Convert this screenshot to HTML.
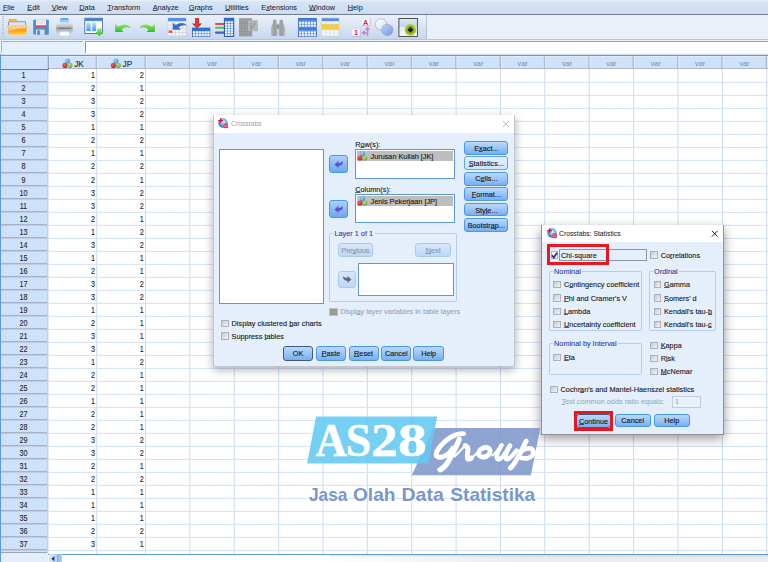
<!DOCTYPE html>
<html><head><meta charset="utf-8"><title>SPSS Crosstabs</title>
<style>
html,body{margin:0;padding:0;}
body{width:768px;height:562px;overflow:hidden;background:#fff;font-family:"Liberation Sans",sans-serif;font-size:7.3px;color:#1a1a1a;position:relative;-webkit-text-stroke:0.12px;}
.a{position:absolute;white-space:nowrap;line-height:1;}
.n{font-size:8.3px;color:#26262c;transform:scaleX(0.87);}
.n.r{text-align:right;transform-origin:100% 50%;}
u{text-decoration:underline;text-underline-offset:0.3px;text-decoration-thickness:0.55px;text-decoration-color:rgba(30,30,40,0.7);}
.btn{position:absolute;box-sizing:border-box;border:1.1px solid #4a98ea;border-radius:3px;background:linear-gradient(#b9d8fb,#9cc7f7 45%,#78aff0);text-align:center;white-space:nowrap;color:#15151c;}
.btn.def{border-color:#40597c;}
.btn.prs{background:linear-gradient(#e3effd,#cfe3fb);border-color:#5aa5ee;}
.btn.arw{background:linear-gradient(#aed0fa,#8dbdf5 45%,#6ea7ee);}
.btn.dis u{text-decoration-color:#8b97a8;}
.btn.dis{border-color:#a9cbf0;background:linear-gradient(#d6e7fb,#bdd7f6);color:#8b97a8;}
.lb{position:absolute;box-sizing:border-box;border:1px solid #5b97d9;background:#fff;}
.cb{position:absolute;box-sizing:border-box;width:7.4px;height:7.4px;border:0.9px solid #adb2ba;background:linear-gradient(135deg,#c6cacf,#eceef0 85%);}
.grp{position:absolute;box-sizing:border-box;border:0.9px solid #b4cdee;border-radius:1.5px;}
.gl{position:absolute;background:#e4effb;color:#3a3fa3;padding:0 1.5px;line-height:1;}
.dlg{position:absolute;box-sizing:border-box;background:#e4effb;border:1px solid #c3c7cd;box-shadow:0 2.5px 9px rgba(0,0,0,0.33);}
.ttl{position:absolute;left:0;top:0;right:0;background:#fff;}
</style></head><body>

<div class="a" style="left:0;top:0;width:768px;height:14px;background:linear-gradient(#e8eff9 0,#d6e3f4 2.5px,#cbdcf1 100%);"></div>
<div class="a" style="left:0;top:13.6px;width:768px;height:1.1px;background:#717d8d;"></div>
<div class="a" style="left:2.9px;top:3.9px;font-size:7.3px;-webkit-text-stroke:0.04px;color:#20222a;"><u>F</u>ile</div>
<div class="a" style="left:27.3px;top:3.9px;font-size:7.3px;-webkit-text-stroke:0.04px;color:#20222a;"><u>E</u>dit</div>
<div class="a" style="left:51.7px;top:3.9px;font-size:7.3px;-webkit-text-stroke:0.04px;color:#20222a;"><u>V</u>iew</div>
<div class="a" style="left:79.3px;top:3.9px;font-size:7.3px;-webkit-text-stroke:0.04px;color:#20222a;"><u>D</u>ata</div>
<div class="a" style="left:107.3px;top:3.9px;font-size:7.3px;-webkit-text-stroke:0.04px;color:#20222a;"><u>T</u>ransform</div>
<div class="a" style="left:152.7px;top:3.9px;font-size:7.3px;-webkit-text-stroke:0.04px;color:#20222a;"><u>A</u>nalyze</div>
<div class="a" style="left:188.7px;top:3.9px;font-size:7.3px;-webkit-text-stroke:0.04px;color:#20222a;"><u>G</u>raphs</div>
<div class="a" style="left:225px;top:3.9px;font-size:7.3px;-webkit-text-stroke:0.04px;color:#20222a;"><u>U</u>tilities</div>
<div class="a" style="left:261.3px;top:3.9px;font-size:7.3px;-webkit-text-stroke:0.04px;color:#20222a;">E<u>x</u>tensions</div>
<div class="a" style="left:309px;top:3.9px;font-size:7.3px;-webkit-text-stroke:0.04px;color:#20222a;"><u>W</u>indow</div>
<div class="a" style="left:347.7px;top:3.9px;font-size:7.3px;-webkit-text-stroke:0.04px;color:#20222a;"><u>H</u>elp</div>
<div class="a" style="left:0;top:14.7px;width:768px;height:26px;background:#e9f0fa;"></div>
<div class="a" style="left:0;top:14.7px;width:426px;height:24.6px;background:linear-gradient(#e9f0fa,#dbe6f6 45%,#c4d6ee);border-right:1px solid #b8c4d4;border-bottom:1px solid #b3bfce;"></div>
<div class="a" style="left:2px;top:16px;width:1.5px;height:22px;background:repeating-linear-gradient(#b9c6d8 0,#b9c6d8 1px,transparent 1px,transparent 2px);"></div>
<svg class="a" style="left:0;top:0;" width="768" height="56" viewBox="0 0 768 56">
<defs>
<linearGradient id="gFold" x1="0" y1="0" x2="0" y2="1"><stop offset="0" stop-color="#ffc562"/><stop offset="0.55" stop-color="#f89d1c"/><stop offset="1" stop-color="#ffd95e"/></linearGradient>
<linearGradient id="gBlue" x1="0" y1="0" x2="0" y2="1"><stop offset="0" stop-color="#bfe0fa"/><stop offset="1" stop-color="#4a96e4"/></linearGradient>
<linearGradient id="gGrn" x1="0" y1="0" x2="0" y2="1"><stop offset="0" stop-color="#8fea6a"/><stop offset="1" stop-color="#38b82e"/></linearGradient>
<linearGradient id="gGry" x1="0" y1="0" x2="0" y2="1"><stop offset="0" stop-color="#e2e4e6"/><stop offset="0.5" stop-color="#a9adb0"/><stop offset="1" stop-color="#cfd2d5"/></linearGradient>
<linearGradient id="gTab" x1="0" y1="0" x2="0" y2="1"><stop offset="0" stop-color="#2f6fd0"/><stop offset="1" stop-color="#5b9be8"/></linearGradient>
<radialGradient id="gBallB" cx="0.4" cy="0.35" r="0.7"><stop offset="0" stop-color="#a9d2f6"/><stop offset="1" stop-color="#3d86d6"/></radialGradient>
<radialGradient id="gBallR" cx="0.4" cy="0.35" r="0.7"><stop offset="0" stop-color="#f46a6a"/><stop offset="1" stop-color="#c9101c"/></radialGradient>
<radialGradient id="gBallG" cx="0.4" cy="0.35" r="0.7"><stop offset="0" stop-color="#b5e08a"/><stop offset="1" stop-color="#5fa93a"/></radialGradient>
<g id="balls"><circle cx="2.6" cy="-4.3" r="2.5" fill="url(#gBallB)"/><circle cx="0" cy="0" r="2.55" fill="url(#gBallR)"/><circle cx="4.9" cy="0" r="2.55" fill="url(#gBallG)"/></g>
</defs>
<linearGradient id="gTabF" x1="0" y1="0" x2="0" y2="1"><stop offset="0" stop-color="#ffe07a"/><stop offset="1" stop-color="#f0a22c"/></linearGradient>
<path d="M8.6 34 L8.6 20.2 Q8.6 19.1 9.7 19.1 L15.4 19.1 Q16.4 19.1 16.7 20.1 L17 21 L24.6 21 Q25.6 21 25.6 22 L25.6 34 Z" fill="#e99b2d"/>
<path d="M9.2 21 L9.2 20.4 Q9.2 19.7 9.9 19.7 L15.2 19.7 Q15.9 19.7 16.1 20.4 L16.3 21 Z" fill="url(#gTabF)"/>
<rect x="8.3" y="22.3" width="17.5" height="3.2" fill="#3f6fcf"/>
<rect x="9" y="22.3" width="16.2" height="3.2" fill="#f6f9ff"/>
<rect x="9" y="23.5" width="16.2" height="0.9" fill="#b7d0f2"/>
<path d="M7.4 25.9 Q7.3 25 8.2 25 L26.6 25 Q27.5 25 27.4 25.9 L25.9 34.2 Q25.8 35.1 24.9 35.1 L10 35.1 Q9.1 35.1 9 34.2 Z" fill="url(#gFold)"/>
<path d="M8.1 25.6 L26.7 25.6 L26.4 27.4 Q17 27.8 8.8 31.2 Z" fill="#fff" fill-opacity="0.36"/>
<path d="M33.2 20.6 Q33.2 19.8 34 19.8 L48 19.8 Q48.8 19.8 48.8 20.6 L48.8 34 Q48.8 34.8 48 34.8 L34.8 34.8 L33.2 33.4 Z" fill="#4f8fcb"/>
<rect x="36.0" y="19.8" width="10.1" height="5.7" fill="#eef2f7"/>
<rect x="37.2" y="21.4" width="7.8" height="0.6" fill="#c9d0da"/><rect x="37.2" y="22.8" width="7.8" height="0.6" fill="#c9d0da"/>
<rect x="36.0" y="25.4" width="10.1" height="2.0" fill="#e34b72"/>
<rect x="36" y="29.6" width="8.6" height="5.2" fill="#d9e0e8"/><rect x="37.4" y="30.4" width="2.3" height="4.4" fill="#3f7fc0"/>
<linearGradient id="gPap" x1="0" y1="0" x2="0" y2="1"><stop offset="0" stop-color="#4f9fe8"/><stop offset="0.35" stop-color="#8cc3f3"/><stop offset="1" stop-color="#e4f1fc"/></linearGradient>
<path d="M59.4 24.6 L60.2 18.9 Q60.4 18.1 61.2 18.1 L67.6 18.1 Q68.4 18.1 68.6 18.9 L69.4 24.6 Z" fill="url(#gPap)"/>
<rect x="56" y="23.2" width="16.8" height="10.4" rx="2.8" fill="url(#gGry)"/>
<rect x="57.6" y="27.6" width="13.6" height="1.5" fill="#7d8185"/>
<rect x="70.2" y="26.4" width="1.2" height="1.2" fill="#6fdc5a"/>
<path d="M59.6 31.4 L69.2 31.4 L69.8 36 L59 36 Z" fill="#f4f8fd" stroke="#b9c1cb" stroke-width="0.4"/>
<rect x="84.8" y="18.3" width="17.6" height="15.2" fill="#fdfefe" stroke="#4b67a6" stroke-width="0.9"/>
<rect x="85.2" y="18.6" width="16.8" height="2.6" fill="url(#gTab)"/>
<rect x="86.4" y="22.5" width="4.3" height="8.6" fill="url(#gBlue)"/><rect x="92.1" y="22.5" width="4.1" height="8.6" fill="url(#gBlue)"/>
<path d="M97.3 28.4 L101.6 28.4 L101.6 32 L103.2 32 L99.4 36.2 L95.4 32 L97.3 32 Z" fill="url(#gGrn)"/>
<path id="undo" d="M115.1 23.9 L115.1 31.9 L123.5 31.9 L121.5 29.8 Q125 25.6 130.8 28.3 Q127 22 118 26.4 Z" fill="url(#gGrn)"/>
<use href="#undo" transform="translate(270,0) scale(-1,1)"/>
<rect x="168" y="18" width="18" height="18" rx="0.8" fill="#f3f4f6" stroke="#c2c6cc" stroke-width="0.5"/>
<rect x="168" y="18" width="18" height="3.3" fill="#5b8fe6"/>
<rect x="171.7" y="21.3" width="0.6" height="14.7" fill="#c9ccd2"/>
<rect x="175.29999999999998" y="21.3" width="0.6" height="14.7" fill="#c9ccd2"/>
<rect x="178.9" y="21.3" width="0.6" height="14.7" fill="#c9ccd2"/>
<rect x="182.5" y="21.3" width="0.6" height="14.7" fill="#c9ccd2"/>
<rect x="168" y="24.7" width="18" height="0.6" fill="#c9ccd2"/>
<rect x="168" y="28.400000000000002" width="18" height="0.6" fill="#c9ccd2"/>
<rect x="168" y="32.10000000000001" width="18" height="0.6" fill="#c9ccd2"/>
<rect x="168.7" y="30.3" width="3.5" height="2.6" fill="#ee4c60"/>
<path d="M172.8 22.7 L172.8 29.8 L180.8 29.8 L178.6 27.6 Q181.5 24.3 187 25.4 Q182.5 20.8 175.6 24.9 Z" fill="#2f6fd4"/>
<linearGradient id="gRed" x1="0" y1="0" x2="1" y2="0"><stop offset="0" stop-color="#b2231b"/><stop offset="0.5" stop-color="#e2402f"/><stop offset="1" stop-color="#a81c15"/></linearGradient>
<path d="M195 18 L199 18 L199 23.4 L202 23.4 L197 28.8 L192 23.4 L195 23.4 Z" fill="url(#gRed)"/>
<rect x="192.3" y="28" width="17.6" height="8.7" fill="#4c88de" stroke="#2b4f9e" stroke-width="0.6"/>
<rect x="192.3" y="28" width="17.6" height="2.8" fill="#2f6fce"/>
<rect x="192.85" y="31.2" width="2.35" height="2.3" fill="#e9f2fe"/><rect x="192.85" y="34.05" width="2.35" height="2.3" fill="#e9f2fe"/>
<rect x="195.73" y="31.2" width="2.35" height="2.3" fill="#e9f2fe"/><rect x="195.73" y="34.05" width="2.35" height="2.3" fill="#e9f2fe"/>
<rect x="198.61" y="31.2" width="2.35" height="2.3" fill="#e9f2fe"/><rect x="198.61" y="34.05" width="2.35" height="2.3" fill="#e9f2fe"/>
<rect x="201.49" y="31.2" width="2.35" height="2.3" fill="#e9f2fe"/><rect x="201.49" y="34.05" width="2.35" height="2.3" fill="#e9f2fe"/>
<rect x="204.37" y="31.2" width="2.35" height="2.3" fill="#e9f2fe"/><rect x="204.37" y="34.05" width="2.35" height="2.3" fill="#e9f2fe"/>
<rect x="207.25" y="31.2" width="2.35" height="2.3" fill="#e9f2fe"/><rect x="207.25" y="34.05" width="2.35" height="2.3" fill="#e9f2fe"/>
<rect x="215" y="22.9" width="10.6" height="2.1" rx="1" fill="#e8455f"/>
<rect x="215" y="26.7" width="10.6" height="2.1" rx="1" fill="#56c63f"/>
<rect x="215" y="31.6" width="10.6" height="2.2" rx="1" fill="#3f63d8"/>
<rect x="224.3" y="18.2" width="9.5" height="18.3" fill="#3f7bd8" stroke="#244c9c" stroke-width="0.8"/>
<rect x="224.3" y="18.2" width="9.5" height="2.6" fill="#2f6fce"/>
<rect x="225.00" y="21.30" width="2.4" height="2.0" fill="#f2f7fe"/>
<rect x="227.85" y="21.30" width="2.4" height="2.0" fill="#f2f7fe"/>
<rect x="230.70" y="21.30" width="2.4" height="2.0" fill="#f2f7fe"/>
<rect x="225.00" y="23.80" width="2.4" height="2.0" fill="#f2f7fe"/>
<rect x="227.85" y="23.80" width="2.4" height="2.0" fill="#f2f7fe"/>
<rect x="230.70" y="23.80" width="2.4" height="2.0" fill="#f2f7fe"/>
<rect x="225.00" y="26.30" width="2.4" height="2.0" fill="#f2f7fe"/>
<rect x="227.85" y="26.30" width="2.4" height="2.0" fill="#f2f7fe"/>
<rect x="230.70" y="26.30" width="2.4" height="2.0" fill="#f2f7fe"/>
<rect x="225.00" y="28.80" width="2.4" height="2.0" fill="#f2f7fe"/>
<rect x="227.85" y="28.80" width="2.4" height="2.0" fill="#f2f7fe"/>
<rect x="230.70" y="28.80" width="2.4" height="2.0" fill="#f2f7fe"/>
<rect x="225.00" y="31.30" width="2.4" height="2.0" fill="#f2f7fe"/>
<rect x="227.85" y="31.30" width="2.4" height="2.0" fill="#f2f7fe"/>
<rect x="230.70" y="31.30" width="2.4" height="2.0" fill="#f2f7fe"/>
<rect x="225.00" y="33.80" width="2.4" height="2.0" fill="#f2f7fe"/>
<rect x="227.85" y="33.80" width="2.4" height="2.0" fill="#f2f7fe"/>
<rect x="230.70" y="33.80" width="2.4" height="2.0" fill="#f2f7fe"/>
<rect x="239" y="18.2" width="13.2" height="18.2" fill="#9fa1a3"/>
<rect x="241.64" y="18.2" width="0.4" height="18.2" fill="#8a8c8e"/>
<rect x="244.28" y="18.2" width="0.4" height="18.2" fill="#8a8c8e"/>
<rect x="246.92" y="18.2" width="0.4" height="18.2" fill="#8a8c8e"/>
<rect x="249.56" y="18.2" width="0.4" height="18.2" fill="#8a8c8e"/>
<rect x="239" y="20.8" width="13.2" height="0.4" fill="#8a8c8e"/>
<rect x="239" y="23.4" width="13.2" height="0.4" fill="#8a8c8e"/>
<rect x="239" y="26.0" width="13.2" height="0.4" fill="#8a8c8e"/>
<rect x="239" y="28.6" width="13.2" height="0.4" fill="#8a8c8e"/>
<rect x="239" y="31.2" width="13.2" height="0.4" fill="#8a8c8e"/>
<rect x="239" y="33.8" width="13.2" height="0.4" fill="#8a8c8e"/>
<rect x="248" y="20.3" width="9.9" height="10.9" fill="#b5b6b8"/>
<path d="M251 23 L251 30.5 M251 27.5 Q253 28.5 254.3 25 L254.6 22.5" stroke="#7f8183" stroke-width="0.8" fill="none"/>
<linearGradient id="gBin" x1="0" y1="0" x2="1" y2="0"><stop offset="0" stop-color="#b9bbbd"/><stop offset="0.5" stop-color="#9b9d9f"/><stop offset="1" stop-color="#a9abad"/></linearGradient>
<path id="binL" d="M273.2 19.8 L276.3 19.8 L276.7 23.4 L277.3 24.4 L277.3 34.5 Q277.3 35.9 275.9 35.9 L272.4 35.9 Q271 35.9 271 34.5 L271 29 Q271 25.4 272.8 23.4 Z" fill="url(#gBin)"/>
<use href="#binL" transform="translate(556,0) scale(-1,1)"/>
<rect x="277" y="24.6" width="2" height="4.2" fill="#8f9193"/>
<rect x="298.5" y="18.4" width="17.8" height="8.7" fill="#4c88de" stroke="#2b4f9e" stroke-width="0.6"/>
<rect x="298.5" y="18.4" width="17.8" height="2.9" fill="url(#gTab)"/>
<rect x="299.05" y="21.70" width="2.35" height="2.25" fill="#e9f2fe"/><rect x="299.05" y="24.50" width="2.35" height="2.25" fill="#e9f2fe"/>
<rect x="301.95" y="21.70" width="2.35" height="2.25" fill="#e9f2fe"/><rect x="301.95" y="24.50" width="2.35" height="2.25" fill="#e9f2fe"/>
<rect x="304.85" y="21.70" width="2.35" height="2.25" fill="#e9f2fe"/><rect x="304.85" y="24.50" width="2.35" height="2.25" fill="#e9f2fe"/>
<rect x="307.75" y="21.70" width="2.35" height="2.25" fill="#e9f2fe"/><rect x="307.75" y="24.50" width="2.35" height="2.25" fill="#e9f2fe"/>
<rect x="310.65" y="21.70" width="2.35" height="2.25" fill="#e9f2fe"/><rect x="310.65" y="24.50" width="2.35" height="2.25" fill="#e9f2fe"/>
<rect x="313.55" y="21.70" width="2.35" height="2.25" fill="#e9f2fe"/><rect x="313.55" y="24.50" width="2.35" height="2.25" fill="#e9f2fe"/>
<rect x="298.5" y="28.0" width="17.8" height="8.7" fill="#4c88de" stroke="#2b4f9e" stroke-width="0.6"/>
<rect x="298.5" y="28.0" width="17.8" height="2.9" fill="url(#gTab)"/>
<rect x="299.05" y="31.30" width="2.35" height="2.25" fill="#e9f2fe"/><rect x="299.05" y="34.10" width="2.35" height="2.25" fill="#e9f2fe"/>
<rect x="301.95" y="31.30" width="2.35" height="2.25" fill="#e9f2fe"/><rect x="301.95" y="34.10" width="2.35" height="2.25" fill="#e9f2fe"/>
<rect x="304.85" y="31.30" width="2.35" height="2.25" fill="#e9f2fe"/><rect x="304.85" y="34.10" width="2.35" height="2.25" fill="#e9f2fe"/>
<rect x="307.75" y="31.30" width="2.35" height="2.25" fill="#e9f2fe"/><rect x="307.75" y="34.10" width="2.35" height="2.25" fill="#e9f2fe"/>
<rect x="310.65" y="31.30" width="2.35" height="2.25" fill="#e9f2fe"/><rect x="310.65" y="34.10" width="2.35" height="2.25" fill="#e9f2fe"/>
<rect x="313.55" y="31.30" width="2.35" height="2.25" fill="#e9f2fe"/><rect x="313.55" y="34.10" width="2.35" height="2.25" fill="#e9f2fe"/>
<rect x="321.7" y="18.2" width="17.2" height="17.9" rx="0.8" fill="#f4f5f7" stroke="#c2c6cc" stroke-width="0.5"/>
<rect x="321.7" y="18.2" width="17.2" height="3" fill="#5b8fe6"/>
<rect x="321.7" y="23.9" width="17.2" height="5.8" fill="#f7cc1c"/>
<rect x="325.7" y="21.2" width="0.6" height="14.9" fill="#d5d7db" opacity="0.8"/>
<rect x="330.0" y="21.2" width="0.6" height="14.9" fill="#d5d7db" opacity="0.8"/>
<rect x="334.29999999999995" y="21.2" width="0.6" height="14.9" fill="#d5d7db" opacity="0.8"/>
<rect x="321.7" y="23.9" width="17.2" height="0.5" fill="#d9dbde" opacity="0.8"/>
<rect x="321.7" y="26.85" width="17.2" height="0.5" fill="#d9dbde" opacity="0.8"/>
<rect x="321.7" y="29.8" width="17.2" height="0.5" fill="#d9dbde" opacity="0.8"/>
<rect x="321.7" y="32.75" width="17.2" height="0.5" fill="#d9dbde" opacity="0.8"/>
<rect x="361.6" y="18.9" width="8.8" height="6.8" fill="#9aa3b0"/><rect x="361.1" y="18.4" width="8.8" height="6.8" fill="#fbfbfd" stroke="#c8ccd3" stroke-width="0.3"/>
<text x="365.5" y="24.6" font-family="Liberation Sans" font-weight="bold" font-size="7.2" text-anchor="middle" fill="#d81b60">A</text>
<rect x="352.1" y="29.6" width="8.8" height="6.8" fill="#9aa3b0"/><rect x="351.6" y="29.1" width="8.8" height="6.8" fill="#fbfbfd" stroke="#c8ccd3" stroke-width="0.3"/>
<text x="356" y="35.4" font-family="Liberation Sans" font-weight="bold" font-size="7.4" text-anchor="middle" fill="#d81b60">1</text>
<path d="M367.5 35.9 L367.5 29 M366.2 29.4 L367.5 27.2 L368.8 29.4 Z M367.5 32.8 L364 32.8 M364.4 31.5 L362.4 32.8 L364.4 34.1 Z" stroke="#c985cf" stroke-width="1.5" fill="#c985cf" stroke-linejoin="round"/>
<linearGradient id="gC1" x1="0" y1="0" x2="1" y2="1"><stop offset="0" stop-color="#ffffff"/><stop offset="1" stop-color="#d3def4"/></linearGradient>
<linearGradient id="gC2" x1="0" y1="0" x2="1" y2="1"><stop offset="0" stop-color="#bdd1f7"/><stop offset="1" stop-color="#4f84e6"/></linearGradient>
<circle cx="381.1" cy="24.5" r="5.7" fill="url(#gC1)" stroke="#9a9ea6" stroke-width="0.6"/>
<circle cx="387.3" cy="29.9" r="5.7" fill="url(#gC2)" fill-opacity="0.78" stroke="#9a9ea6" stroke-width="0.6"/>
<linearGradient id="gPB" x1="0" y1="0" x2="0" y2="1"><stop offset="0" stop-color="#dfe8f6"/><stop offset="0.45" stop-color="#c3d6ee"/><stop offset="0.46" stop-color="#e2ebf8"/><stop offset="1" stop-color="#f7f9fd"/></linearGradient>
<rect x="398.9" y="18.5" width="18.5" height="17.9" fill="url(#gPB)" stroke="#3d3f42" stroke-width="0.9"/>
<circle cx="410.4" cy="29.8" r="5.9" fill="#b3d033"/><circle cx="410.4" cy="29.8" r="4.4" fill="#8fb01e"/>
<path d="M407.9 29.8 L412.9 29.8 M410.4 27.3 L410.4 32.3" stroke="#1a1c12" stroke-width="2.3"/>
</svg>
<div class="a" style="left:0;top:39.3px;width:768px;height:1px;background:#b9c5d5;"></div>
<div class="a" style="left:0;top:40.2px;width:768px;height:14.7px;background:#edf3fb;"></div>
<div class="a" style="left:1.2px;top:41.3px;width:81.8px;height:11.8px;background:#e6f0fc;border-top:1px solid #a9b1bc;border-left:1px solid #a9b1bc;box-sizing:border-box;"></div>
<div class="a" style="left:85.2px;top:41.3px;width:683px;height:11.8px;background:#fff;border-top:1px solid #9aa1ab;border-left:1px solid #8e959e;box-sizing:border-box;"></div>
<svg class="a" style="left:0;top:0;" width="768" height="562" viewBox="0 0 768 562">
<rect x="0" y="56.0" width="768" height="12.3" fill="#cfe2fb"/>
<rect x="0" y="56.0" width="48.2" height="13.4" fill="#cfe2fb"/>
<rect x="0" y="69" width="47.0" height="493" fill="#cfe2fb"/>
<rect x="0" y="54.8" width="768" height="1.25" fill="#5b9bd8"/>
<rect x="0" y="56.0" width="768" height="0.8" fill="#e3eefc"/>
<rect x="95.60" y="56.3" width="1.5" height="12.2" fill="#b3bcc9"/>
<rect x="97.10" y="56.6" width="0.8" height="11.6" fill="#e6f0fc"/>
<rect x="144.40" y="56.3" width="1.5" height="12.2" fill="#b3bcc9"/>
<rect x="145.90" y="56.6" width="0.8" height="11.6" fill="#e6f0fc"/>
<rect x="188.87" y="56.3" width="1.5" height="12.2" fill="#b3bcc9"/>
<rect x="190.37" y="56.6" width="0.8" height="11.6" fill="#e6f0fc"/>
<rect x="233.24" y="56.3" width="1.5" height="12.2" fill="#b3bcc9"/>
<rect x="234.74" y="56.6" width="0.8" height="11.6" fill="#e6f0fc"/>
<rect x="277.61" y="56.3" width="1.5" height="12.2" fill="#b3bcc9"/>
<rect x="279.11" y="56.6" width="0.8" height="11.6" fill="#e6f0fc"/>
<rect x="321.98" y="56.3" width="1.5" height="12.2" fill="#b3bcc9"/>
<rect x="323.48" y="56.6" width="0.8" height="11.6" fill="#e6f0fc"/>
<rect x="366.35" y="56.3" width="1.5" height="12.2" fill="#b3bcc9"/>
<rect x="367.85" y="56.6" width="0.8" height="11.6" fill="#e6f0fc"/>
<rect x="410.72" y="56.3" width="1.5" height="12.2" fill="#b3bcc9"/>
<rect x="412.22" y="56.6" width="0.8" height="11.6" fill="#e6f0fc"/>
<rect x="455.09" y="56.3" width="1.5" height="12.2" fill="#b3bcc9"/>
<rect x="456.59" y="56.6" width="0.8" height="11.6" fill="#e6f0fc"/>
<rect x="499.46" y="56.3" width="1.5" height="12.2" fill="#b3bcc9"/>
<rect x="500.96" y="56.6" width="0.8" height="11.6" fill="#e6f0fc"/>
<rect x="543.83" y="56.3" width="1.5" height="12.2" fill="#b3bcc9"/>
<rect x="545.33" y="56.6" width="0.8" height="11.6" fill="#e6f0fc"/>
<rect x="588.20" y="56.3" width="1.5" height="12.2" fill="#b3bcc9"/>
<rect x="589.70" y="56.6" width="0.8" height="11.6" fill="#e6f0fc"/>
<rect x="632.57" y="56.3" width="1.5" height="12.2" fill="#b3bcc9"/>
<rect x="634.07" y="56.6" width="0.8" height="11.6" fill="#e6f0fc"/>
<rect x="676.94" y="56.3" width="1.5" height="12.2" fill="#b3bcc9"/>
<rect x="678.44" y="56.6" width="0.8" height="11.6" fill="#e6f0fc"/>
<rect x="721.31" y="56.3" width="1.5" height="12.2" fill="#b3bcc9"/>
<rect x="722.81" y="56.6" width="0.8" height="11.6" fill="#e6f0fc"/>
<rect x="765.68" y="56.3" width="1.5" height="12.2" fill="#b3bcc9"/>
<rect x="767.18" y="56.6" width="0.8" height="11.6" fill="#e6f0fc"/>
<rect x="48" y="68.05" width="720" height="0.9" fill="#aab4c3"/>
<rect x="47.8" y="56.3" width="1.0" height="13.7" fill="#727d8c"/>
<rect x="0" y="69.0" width="48.8" height="1.05" fill="#727d8c"/>
<rect x="48.8" y="56.6" width="0.7" height="11.5" fill="#e6f0fc"/>
<rect x="0.9" y="80.95" width="46.2" height="1.0" fill="#a6b0bf"/>
<rect x="0.9" y="81.95" width="46.2" height="1.1" fill="#bfcce0"/>
<rect x="0.9" y="93.95" width="46.2" height="1.0" fill="#a6b0bf"/>
<rect x="0.9" y="94.95" width="46.2" height="1.1" fill="#bfcce0"/>
<rect x="0.9" y="106.95" width="46.2" height="1.0" fill="#a6b0bf"/>
<rect x="0.9" y="107.95" width="46.2" height="1.1" fill="#bfcce0"/>
<rect x="0.9" y="119.95" width="46.2" height="1.0" fill="#a6b0bf"/>
<rect x="0.9" y="120.95" width="46.2" height="1.1" fill="#bfcce0"/>
<rect x="0.9" y="132.95" width="46.2" height="1.0" fill="#a6b0bf"/>
<rect x="0.9" y="133.95" width="46.2" height="1.1" fill="#bfcce0"/>
<rect x="0.9" y="145.95" width="46.2" height="1.0" fill="#a6b0bf"/>
<rect x="0.9" y="146.95" width="46.2" height="1.1" fill="#bfcce0"/>
<rect x="0.9" y="158.95" width="46.2" height="1.0" fill="#a6b0bf"/>
<rect x="0.9" y="159.95" width="46.2" height="1.1" fill="#bfcce0"/>
<rect x="0.9" y="171.95" width="46.2" height="1.0" fill="#a6b0bf"/>
<rect x="0.9" y="172.95" width="46.2" height="1.1" fill="#bfcce0"/>
<rect x="0.9" y="184.95" width="46.2" height="1.0" fill="#a6b0bf"/>
<rect x="0.9" y="185.95" width="46.2" height="1.1" fill="#bfcce0"/>
<rect x="0.9" y="197.95" width="46.2" height="1.0" fill="#a6b0bf"/>
<rect x="0.9" y="198.95" width="46.2" height="1.1" fill="#bfcce0"/>
<rect x="0.9" y="210.95" width="46.2" height="1.0" fill="#a6b0bf"/>
<rect x="0.9" y="211.95" width="46.2" height="1.1" fill="#bfcce0"/>
<rect x="0.9" y="223.95" width="46.2" height="1.0" fill="#a6b0bf"/>
<rect x="0.9" y="224.95" width="46.2" height="1.1" fill="#bfcce0"/>
<rect x="0.9" y="236.95" width="46.2" height="1.0" fill="#a6b0bf"/>
<rect x="0.9" y="237.95" width="46.2" height="1.1" fill="#bfcce0"/>
<rect x="0.9" y="249.95" width="46.2" height="1.0" fill="#a6b0bf"/>
<rect x="0.9" y="250.95" width="46.2" height="1.1" fill="#bfcce0"/>
<rect x="0.9" y="262.95" width="46.2" height="1.0" fill="#a6b0bf"/>
<rect x="0.9" y="263.95" width="46.2" height="1.1" fill="#bfcce0"/>
<rect x="0.9" y="275.95" width="46.2" height="1.0" fill="#a6b0bf"/>
<rect x="0.9" y="276.95" width="46.2" height="1.1" fill="#bfcce0"/>
<rect x="0.9" y="288.95" width="46.2" height="1.0" fill="#a6b0bf"/>
<rect x="0.9" y="289.95" width="46.2" height="1.1" fill="#bfcce0"/>
<rect x="0.9" y="301.95" width="46.2" height="1.0" fill="#a6b0bf"/>
<rect x="0.9" y="302.95" width="46.2" height="1.1" fill="#bfcce0"/>
<rect x="0.9" y="314.95" width="46.2" height="1.0" fill="#a6b0bf"/>
<rect x="0.9" y="315.95" width="46.2" height="1.1" fill="#bfcce0"/>
<rect x="0.9" y="327.95" width="46.2" height="1.0" fill="#a6b0bf"/>
<rect x="0.9" y="328.95" width="46.2" height="1.1" fill="#bfcce0"/>
<rect x="0.9" y="340.95" width="46.2" height="1.0" fill="#a6b0bf"/>
<rect x="0.9" y="341.95" width="46.2" height="1.1" fill="#bfcce0"/>
<rect x="0.9" y="353.95" width="46.2" height="1.0" fill="#a6b0bf"/>
<rect x="0.9" y="354.95" width="46.2" height="1.1" fill="#bfcce0"/>
<rect x="0.9" y="366.95" width="46.2" height="1.0" fill="#a6b0bf"/>
<rect x="0.9" y="367.95" width="46.2" height="1.1" fill="#bfcce0"/>
<rect x="0.9" y="379.95" width="46.2" height="1.0" fill="#a6b0bf"/>
<rect x="0.9" y="380.95" width="46.2" height="1.1" fill="#bfcce0"/>
<rect x="0.9" y="392.95" width="46.2" height="1.0" fill="#a6b0bf"/>
<rect x="0.9" y="393.95" width="46.2" height="1.1" fill="#bfcce0"/>
<rect x="0.9" y="405.95" width="46.2" height="1.0" fill="#a6b0bf"/>
<rect x="0.9" y="406.95" width="46.2" height="1.1" fill="#bfcce0"/>
<rect x="0.9" y="418.95" width="46.2" height="1.0" fill="#a6b0bf"/>
<rect x="0.9" y="419.95" width="46.2" height="1.1" fill="#bfcce0"/>
<rect x="0.9" y="431.95" width="46.2" height="1.0" fill="#a6b0bf"/>
<rect x="0.9" y="432.95" width="46.2" height="1.1" fill="#bfcce0"/>
<rect x="0.9" y="444.95" width="46.2" height="1.0" fill="#a6b0bf"/>
<rect x="0.9" y="445.95" width="46.2" height="1.1" fill="#bfcce0"/>
<rect x="0.9" y="457.95" width="46.2" height="1.0" fill="#a6b0bf"/>
<rect x="0.9" y="458.95" width="46.2" height="1.1" fill="#bfcce0"/>
<rect x="0.9" y="470.95" width="46.2" height="1.0" fill="#a6b0bf"/>
<rect x="0.9" y="471.95" width="46.2" height="1.1" fill="#bfcce0"/>
<rect x="0.9" y="483.95" width="46.2" height="1.0" fill="#a6b0bf"/>
<rect x="0.9" y="484.95" width="46.2" height="1.1" fill="#bfcce0"/>
<rect x="0.9" y="496.95" width="46.2" height="1.0" fill="#a6b0bf"/>
<rect x="0.9" y="497.95" width="46.2" height="1.1" fill="#bfcce0"/>
<rect x="0.9" y="509.95" width="46.2" height="1.0" fill="#a6b0bf"/>
<rect x="0.9" y="510.95" width="46.2" height="1.1" fill="#bfcce0"/>
<rect x="0.9" y="522.95" width="46.2" height="1.0" fill="#a6b0bf"/>
<rect x="0.9" y="523.95" width="46.2" height="1.1" fill="#bfcce0"/>
<rect x="0.9" y="535.95" width="46.2" height="1.0" fill="#a6b0bf"/>
<rect x="0.9" y="536.95" width="46.2" height="1.1" fill="#bfcce0"/>
<rect x="0.9" y="548.95" width="46.2" height="1.0" fill="#a6b0bf"/>
<rect x="0.9" y="549.95" width="46.2" height="1.1" fill="#bfcce0"/>
<rect x="0.9" y="561.95" width="46.2" height="1.0" fill="#a6b0bf"/>
<rect x="0.9" y="562.95" width="46.2" height="1.1" fill="#bfcce0"/>
<rect x="47.0" y="70.05" width="1.5" height="491.95" fill="#c6d1e0"/>
<rect x="96.20" y="69" width="1.0" height="493" fill="#c9dbf2"/>
<rect x="145.00" y="69" width="1.0" height="493" fill="#c9dbf2"/>
<rect x="189.37" y="69" width="1.0" height="493" fill="#c9dbf2"/>
<rect x="233.74" y="69" width="1.0" height="493" fill="#c9dbf2"/>
<rect x="278.11" y="69" width="1.0" height="493" fill="#c9dbf2"/>
<rect x="322.48" y="69" width="1.0" height="493" fill="#c9dbf2"/>
<rect x="366.85" y="69" width="1.0" height="493" fill="#c9dbf2"/>
<rect x="411.22" y="69" width="1.0" height="493" fill="#c9dbf2"/>
<rect x="455.59" y="69" width="1.0" height="493" fill="#c9dbf2"/>
<rect x="499.96" y="69" width="1.0" height="493" fill="#c9dbf2"/>
<rect x="544.33" y="69" width="1.0" height="493" fill="#c9dbf2"/>
<rect x="588.70" y="69" width="1.0" height="493" fill="#c9dbf2"/>
<rect x="633.07" y="69" width="1.0" height="493" fill="#c9dbf2"/>
<rect x="677.44" y="69" width="1.0" height="493" fill="#c9dbf2"/>
<rect x="721.81" y="69" width="1.0" height="493" fill="#c9dbf2"/>
<rect x="766.18" y="69" width="1.0" height="493" fill="#c9dbf2"/>
<rect x="48.5" y="81.85" width="720" height="1.1" fill="#d6e4f6"/>
<rect x="48.5" y="94.85" width="720" height="1.1" fill="#d6e4f6"/>
<rect x="48.5" y="107.85" width="720" height="1.1" fill="#d6e4f6"/>
<rect x="48.5" y="120.85" width="720" height="1.1" fill="#d6e4f6"/>
<rect x="48.5" y="133.85" width="720" height="1.1" fill="#d6e4f6"/>
<rect x="48.5" y="146.85" width="720" height="1.1" fill="#d6e4f6"/>
<rect x="48.5" y="159.85" width="720" height="1.1" fill="#d6e4f6"/>
<rect x="48.5" y="172.85" width="720" height="1.1" fill="#d6e4f6"/>
<rect x="48.5" y="185.85" width="720" height="1.1" fill="#d6e4f6"/>
<rect x="48.5" y="198.85" width="720" height="1.1" fill="#d6e4f6"/>
<rect x="48.5" y="211.85" width="720" height="1.1" fill="#d6e4f6"/>
<rect x="48.5" y="224.85" width="720" height="1.1" fill="#d6e4f6"/>
<rect x="48.5" y="237.85" width="720" height="1.1" fill="#d6e4f6"/>
<rect x="48.5" y="250.85" width="720" height="1.1" fill="#d6e4f6"/>
<rect x="48.5" y="263.85" width="720" height="1.1" fill="#d6e4f6"/>
<rect x="48.5" y="276.85" width="720" height="1.1" fill="#d6e4f6"/>
<rect x="48.5" y="289.85" width="720" height="1.1" fill="#d6e4f6"/>
<rect x="48.5" y="302.85" width="720" height="1.1" fill="#d6e4f6"/>
<rect x="48.5" y="315.85" width="720" height="1.1" fill="#d6e4f6"/>
<rect x="48.5" y="328.85" width="720" height="1.1" fill="#d6e4f6"/>
<rect x="48.5" y="341.85" width="720" height="1.1" fill="#d6e4f6"/>
<rect x="48.5" y="354.85" width="720" height="1.1" fill="#d6e4f6"/>
<rect x="48.5" y="367.85" width="720" height="1.1" fill="#d6e4f6"/>
<rect x="48.5" y="380.85" width="720" height="1.1" fill="#d6e4f6"/>
<rect x="48.5" y="393.85" width="720" height="1.1" fill="#d6e4f6"/>
<rect x="48.5" y="406.85" width="720" height="1.1" fill="#d6e4f6"/>
<rect x="48.5" y="419.85" width="720" height="1.1" fill="#d6e4f6"/>
<rect x="48.5" y="432.85" width="720" height="1.1" fill="#d6e4f6"/>
<rect x="48.5" y="445.85" width="720" height="1.1" fill="#d6e4f6"/>
<rect x="48.5" y="458.85" width="720" height="1.1" fill="#d6e4f6"/>
<rect x="48.5" y="471.85" width="720" height="1.1" fill="#d6e4f6"/>
<rect x="48.5" y="484.85" width="720" height="1.1" fill="#d6e4f6"/>
<rect x="48.5" y="497.85" width="720" height="1.1" fill="#d6e4f6"/>
<rect x="48.5" y="510.85" width="720" height="1.1" fill="#d6e4f6"/>
<rect x="48.5" y="523.85" width="720" height="1.1" fill="#d6e4f6"/>
<rect x="48.5" y="536.85" width="720" height="1.1" fill="#d6e4f6"/>
<rect x="48.5" y="549.85" width="720" height="1.1" fill="#d6e4f6"/>
<rect x="48.5" y="562.85" width="720" height="1.1" fill="#d6e4f6"/>
<rect x="0" y="54.8" width="0.9" height="508" fill="#5b9bd8"/>
<use href="#balls" transform="translate(65.0,65.4)"/>
<use href="#balls" transform="translate(113.4,65.4)"/>
</svg>
<div class="a" style="left:74.2px;top:60.2px;font-size:8.3px;color:#2a2a32;">JK</div>
<div class="a" style="left:122.6px;top:60.2px;font-size:8.3px;color:#2a2a32;">JP</div>
<div class="a" style="left:167.69px;top:59.6px;width:30px;margin-left:-15px;text-align:center;font-size:7.3px;color:#828c9a;-webkit-text-stroke:0;">var</div>
<div class="a" style="left:212.06px;top:59.6px;width:30px;margin-left:-15px;text-align:center;font-size:7.3px;color:#828c9a;-webkit-text-stroke:0;">var</div>
<div class="a" style="left:256.43px;top:59.6px;width:30px;margin-left:-15px;text-align:center;font-size:7.3px;color:#828c9a;-webkit-text-stroke:0;">var</div>
<div class="a" style="left:300.80px;top:59.6px;width:30px;margin-left:-15px;text-align:center;font-size:7.3px;color:#828c9a;-webkit-text-stroke:0;">var</div>
<div class="a" style="left:345.17px;top:59.6px;width:30px;margin-left:-15px;text-align:center;font-size:7.3px;color:#828c9a;-webkit-text-stroke:0;">var</div>
<div class="a" style="left:389.54px;top:59.6px;width:30px;margin-left:-15px;text-align:center;font-size:7.3px;color:#828c9a;-webkit-text-stroke:0;">var</div>
<div class="a" style="left:433.90px;top:59.6px;width:30px;margin-left:-15px;text-align:center;font-size:7.3px;color:#828c9a;-webkit-text-stroke:0;">var</div>
<div class="a" style="left:478.27px;top:59.6px;width:30px;margin-left:-15px;text-align:center;font-size:7.3px;color:#828c9a;-webkit-text-stroke:0;">var</div>
<div class="a" style="left:522.64px;top:59.6px;width:30px;margin-left:-15px;text-align:center;font-size:7.3px;color:#828c9a;-webkit-text-stroke:0;">var</div>
<div class="a" style="left:567.01px;top:59.6px;width:30px;margin-left:-15px;text-align:center;font-size:7.3px;color:#828c9a;-webkit-text-stroke:0;">var</div>
<div class="a" style="left:611.38px;top:59.6px;width:30px;margin-left:-15px;text-align:center;font-size:7.3px;color:#828c9a;-webkit-text-stroke:0;">var</div>
<div class="a" style="left:655.75px;top:59.6px;width:30px;margin-left:-15px;text-align:center;font-size:7.3px;color:#828c9a;-webkit-text-stroke:0;">var</div>
<div class="a" style="left:700.12px;top:59.6px;width:30px;margin-left:-15px;text-align:center;font-size:7.3px;color:#828c9a;-webkit-text-stroke:0;">var</div>
<div class="a" style="left:744.49px;top:59.6px;width:30px;margin-left:-15px;text-align:center;font-size:7.3px;color:#828c9a;-webkit-text-stroke:0;">var</div>
<div class="a n" style="left:0;width:46.8px;text-align:center;top:71.35px;">1</div>
<div class="a n r" style="left:60px;width:35.0px;top:71.35px;">1</div>
<div class="a n r" style="left:108px;width:35.8px;top:71.35px;">2</div>
<div class="a n" style="left:0;width:46.8px;text-align:center;top:84.37px;">2</div>
<div class="a n r" style="left:60px;width:35.0px;top:84.37px;">2</div>
<div class="a n r" style="left:108px;width:35.8px;top:84.37px;">1</div>
<div class="a n" style="left:0;width:46.8px;text-align:center;top:97.39px;">3</div>
<div class="a n r" style="left:60px;width:35.0px;top:97.39px;">3</div>
<div class="a n r" style="left:108px;width:35.8px;top:97.39px;">2</div>
<div class="a n" style="left:0;width:46.8px;text-align:center;top:110.41px;">4</div>
<div class="a n r" style="left:60px;width:35.0px;top:110.41px;">3</div>
<div class="a n r" style="left:108px;width:35.8px;top:110.41px;">2</div>
<div class="a n" style="left:0;width:46.8px;text-align:center;top:123.43px;">5</div>
<div class="a n r" style="left:60px;width:35.0px;top:123.43px;">1</div>
<div class="a n r" style="left:108px;width:35.8px;top:123.43px;">1</div>
<div class="a n" style="left:0;width:46.8px;text-align:center;top:136.45px;">6</div>
<div class="a n r" style="left:60px;width:35.0px;top:136.45px;">2</div>
<div class="a n r" style="left:108px;width:35.8px;top:136.45px;">2</div>
<div class="a n" style="left:0;width:46.8px;text-align:center;top:149.47px;">7</div>
<div class="a n r" style="left:60px;width:35.0px;top:149.47px;">1</div>
<div class="a n r" style="left:108px;width:35.8px;top:149.47px;">1</div>
<div class="a n" style="left:0;width:46.8px;text-align:center;top:162.49px;">8</div>
<div class="a n r" style="left:60px;width:35.0px;top:162.49px;">2</div>
<div class="a n r" style="left:108px;width:35.8px;top:162.49px;">2</div>
<div class="a n" style="left:0;width:46.8px;text-align:center;top:175.51px;">9</div>
<div class="a n r" style="left:60px;width:35.0px;top:175.51px;">2</div>
<div class="a n r" style="left:108px;width:35.8px;top:175.51px;">1</div>
<div class="a n" style="left:0;width:46.8px;text-align:center;top:188.53px;">10</div>
<div class="a n r" style="left:60px;width:35.0px;top:188.53px;">3</div>
<div class="a n r" style="left:108px;width:35.8px;top:188.53px;">2</div>
<div class="a n" style="left:0;width:46.8px;text-align:center;top:201.55px;">11</div>
<div class="a n r" style="left:60px;width:35.0px;top:201.55px;">3</div>
<div class="a n r" style="left:108px;width:35.8px;top:201.55px;">2</div>
<div class="a n" style="left:0;width:46.8px;text-align:center;top:214.57px;">12</div>
<div class="a n r" style="left:60px;width:35.0px;top:214.57px;">2</div>
<div class="a n r" style="left:108px;width:35.8px;top:214.57px;">1</div>
<div class="a n" style="left:0;width:46.8px;text-align:center;top:227.59px;">13</div>
<div class="a n r" style="left:60px;width:35.0px;top:227.59px;">1</div>
<div class="a n r" style="left:108px;width:35.8px;top:227.59px;">2</div>
<div class="a n" style="left:0;width:46.8px;text-align:center;top:240.61px;">14</div>
<div class="a n r" style="left:60px;width:35.0px;top:240.61px;">3</div>
<div class="a n r" style="left:108px;width:35.8px;top:240.61px;">2</div>
<div class="a n" style="left:0;width:46.8px;text-align:center;top:253.63px;">15</div>
<div class="a n r" style="left:60px;width:35.0px;top:253.63px;">1</div>
<div class="a n r" style="left:108px;width:35.8px;top:253.63px;">1</div>
<div class="a n" style="left:0;width:46.8px;text-align:center;top:266.65px;">16</div>
<div class="a n r" style="left:60px;width:35.0px;top:266.65px;">2</div>
<div class="a n r" style="left:108px;width:35.8px;top:266.65px;">1</div>
<div class="a n" style="left:0;width:46.8px;text-align:center;top:279.67px;">17</div>
<div class="a n r" style="left:60px;width:35.0px;top:279.67px;">3</div>
<div class="a n r" style="left:108px;width:35.8px;top:279.67px;">2</div>
<div class="a n" style="left:0;width:46.8px;text-align:center;top:292.69px;">18</div>
<div class="a n r" style="left:60px;width:35.0px;top:292.69px;">3</div>
<div class="a n r" style="left:108px;width:35.8px;top:292.69px;">2</div>
<div class="a n" style="left:0;width:46.8px;text-align:center;top:305.71px;">19</div>
<div class="a n r" style="left:60px;width:35.0px;top:305.71px;">1</div>
<div class="a n r" style="left:108px;width:35.8px;top:305.71px;">1</div>
<div class="a n" style="left:0;width:46.8px;text-align:center;top:318.73px;">20</div>
<div class="a n r" style="left:60px;width:35.0px;top:318.73px;">2</div>
<div class="a n r" style="left:108px;width:35.8px;top:318.73px;">1</div>
<div class="a n" style="left:0;width:46.8px;text-align:center;top:331.75px;">21</div>
<div class="a n r" style="left:60px;width:35.0px;top:331.75px;">3</div>
<div class="a n r" style="left:108px;width:35.8px;top:331.75px;">1</div>
<div class="a n" style="left:0;width:46.8px;text-align:center;top:344.77px;">22</div>
<div class="a n r" style="left:60px;width:35.0px;top:344.77px;">3</div>
<div class="a n r" style="left:108px;width:35.8px;top:344.77px;">1</div>
<div class="a n" style="left:0;width:46.8px;text-align:center;top:357.79px;">23</div>
<div class="a n r" style="left:60px;width:35.0px;top:357.79px;">1</div>
<div class="a n r" style="left:108px;width:35.8px;top:357.79px;">2</div>
<div class="a n" style="left:0;width:46.8px;text-align:center;top:370.81px;">24</div>
<div class="a n r" style="left:60px;width:35.0px;top:370.81px;">2</div>
<div class="a n r" style="left:108px;width:35.8px;top:370.81px;">1</div>
<div class="a n" style="left:0;width:46.8px;text-align:center;top:383.83px;">25</div>
<div class="a n r" style="left:60px;width:35.0px;top:383.83px;">2</div>
<div class="a n r" style="left:108px;width:35.8px;top:383.83px;">1</div>
<div class="a n" style="left:0;width:46.8px;text-align:center;top:396.85px;">26</div>
<div class="a n r" style="left:60px;width:35.0px;top:396.85px;">1</div>
<div class="a n r" style="left:108px;width:35.8px;top:396.85px;">1</div>
<div class="a n" style="left:0;width:46.8px;text-align:center;top:409.87px;">27</div>
<div class="a n r" style="left:60px;width:35.0px;top:409.87px;">2</div>
<div class="a n r" style="left:108px;width:35.8px;top:409.87px;">1</div>
<div class="a n" style="left:0;width:46.8px;text-align:center;top:422.89px;">28</div>
<div class="a n r" style="left:60px;width:35.0px;top:422.89px;">2</div>
<div class="a n r" style="left:108px;width:35.8px;top:422.89px;">1</div>
<div class="a n" style="left:0;width:46.8px;text-align:center;top:435.91px;">29</div>
<div class="a n r" style="left:60px;width:35.0px;top:435.91px;">3</div>
<div class="a n r" style="left:108px;width:35.8px;top:435.91px;">2</div>
<div class="a n" style="left:0;width:46.8px;text-align:center;top:448.93px;">30</div>
<div class="a n r" style="left:60px;width:35.0px;top:448.93px;">3</div>
<div class="a n r" style="left:108px;width:35.8px;top:448.93px;">2</div>
<div class="a n" style="left:0;width:46.8px;text-align:center;top:461.95px;">31</div>
<div class="a n r" style="left:60px;width:35.0px;top:461.95px;">2</div>
<div class="a n r" style="left:108px;width:35.8px;top:461.95px;">1</div>
<div class="a n" style="left:0;width:46.8px;text-align:center;top:474.97px;">32</div>
<div class="a n r" style="left:60px;width:35.0px;top:474.97px;">2</div>
<div class="a n r" style="left:108px;width:35.8px;top:474.97px;">2</div>
<div class="a n" style="left:0;width:46.8px;text-align:center;top:487.99px;">33</div>
<div class="a n r" style="left:60px;width:35.0px;top:487.99px;">1</div>
<div class="a n r" style="left:108px;width:35.8px;top:487.99px;">1</div>
<div class="a n" style="left:0;width:46.8px;text-align:center;top:501.01px;">34</div>
<div class="a n r" style="left:60px;width:35.0px;top:501.01px;">1</div>
<div class="a n r" style="left:108px;width:35.8px;top:501.01px;">1</div>
<div class="a n" style="left:0;width:46.8px;text-align:center;top:514.03px;">35</div>
<div class="a n r" style="left:60px;width:35.0px;top:514.03px;">1</div>
<div class="a n r" style="left:108px;width:35.8px;top:514.03px;">1</div>
<div class="a n" style="left:0;width:46.8px;text-align:center;top:527.05px;">36</div>
<div class="a n r" style="left:60px;width:35.0px;top:527.05px;">2</div>
<div class="a n r" style="left:108px;width:35.8px;top:527.05px;">2</div>
<div class="a n" style="left:0;width:46.8px;text-align:center;top:540.07px;">37</div>
<div class="a n r" style="left:60px;width:35.0px;top:540.07px;">3</div>
<div class="a n r" style="left:108px;width:35.8px;top:540.07px;">1</div>
<div class="a" style="left:0;top:553.2px;width:48px;height:9px;background:#e3edfb;"></div>
<div class="a" style="left:0;top:551.6px;width:47.2px;height:0.8px;background:#9aa5b5;"></div>
<div class="a" style="left:48.3px;top:554.4px;width:720px;height:8px;background:linear-gradient(90deg,#fff 0,#fff 38%,#ececef 66%,#ececef 100%);"></div>
<div class="a" style="left:330px;top:554.6px;width:438px;height:3px;background:linear-gradient(rgba(120,125,140,0.16),rgba(120,125,140,0));"></div>
<div class="a" style="left:48.3px;top:553.8px;width:720px;height:1px;background:#5b9bd8;"></div>
<div class="a" style="left:48.5px;top:554.4px;width:8.6px;height:8px;background:linear-gradient(90deg,#d6e5f9,#b9d3f3);"></div>
<div class="a" style="left:57.1px;top:554.4px;width:5.4px;height:8px;background:linear-gradient(90deg,#7fb0ea,#b5d2f4);"></div>
<svg class="a" style="left:50px;top:555px" width="6" height="7"><path d="M4.4 1.2 L1.3 3.7 L4.4 6.2 Z" fill="#2b3344"/></svg>
<div class="a" style="left:0;top:54.3px;width:0.9px;height:508px;background:#5b9bd8;"></div>
<div class="dlg" style="left:213px;top:114.5px;width:302px;height:252.5px;"></div>
<div class="a" style="left:213.6px;top:115.1px;width:300.8px;height:17.70000000000001px;background:#fff;"></div>
<svg class="a" style="left:215.80px;top:115.90px" width="14" height="14" viewBox="-7 -7 14 14"><defs><radialGradient id="gGl222" cx="0.55" cy="0.4" r="0.6"><stop offset="0" stop-color="#e8f3fc"/><stop offset="0.45" stop-color="#86b9e8"/><stop offset="1" stop-color="#286cba"/></radialGradient></defs><circle cx="0" cy="0" r="4.7" fill="url(#gGl222)"/><rect x="0.5" y="0.5" width="4.5" height="4.6" fill="#e2385c"/><rect x="0.5" y="1.7" width="4.5" height="0.5" fill="#f3a3b4"/><rect x="0.5" y="3.2" width="4.5" height="0.5" fill="#f3a3b4"/><path d="M-2.4 -4.8 L-2.4 0 M-4.8 -2.4 L0 -2.4" stroke="#dc143c" stroke-width="1.35"/></svg>
<div class="a" style="left:230.50px;top:119.90px;font-size:7.8px;color:#a2a2a2;-webkit-text-stroke:0;transform:scaleX(0.872);transform-origin:0 50%;">Crosstabs</div>
<svg class="a" style="left:501.5px;top:119.8px" width="8" height="8"><path d="M0.8 0.8 L7 7 M7 0.8 L0.8 7" stroke="#8c8c8c" stroke-width="0.6"/></svg>
<div class="lb" style="left:219.1px;top:149.1px;width:104.6px;height:154.5px;"></div>
<div class="btn arw" style="left:329.3px;top:155.1px;width:19.1px;height:17.7px;"><svg width="10" height="9" viewBox="0 0 10 9" style="position:absolute;left:3.6px;top:3.6px"><path d="M0.6 4.4 L4.4 0.8 L4.4 3 Q8.6 2.6 8.6 0.4 Q9.8 5.6 4.4 6 L4.4 8 Z" fill="#5a55c8"/></svg></div>
<div class="btn arw" style="left:329.3px;top:200.0px;width:19.1px;height:17.7px;"><svg width="10" height="9" viewBox="0 0 10 9" style="position:absolute;left:3.6px;top:3.6px"><path d="M0.6 4.4 L4.4 0.8 L4.4 3 Q8.6 2.6 8.6 0.4 Q9.8 5.6 4.4 6 L4.4 8 Z" fill="#5a55c8"/></svg></div>
<div class="a" style="left:355.20px;top:141.00px;font-size:7.3px;">R<u>o</u>w(s):</div>
<div class="lb" style="left:355.2px;top:149.1px;width:99.6px;height:29.7px;"></div>
<div class="a" style="left:356.8px;top:150.8px;width:96.3px;height:9.8px;background:#bebebe;"></div>
<svg class="a" style="left:357.40px;top:150.10px;" width="12" height="12" viewBox="-3 -8 12 12"><use href="#balls"/></svg>
<div class="a" style="left:370.50px;top:153.00px;font-size:7.3px;">Jurusan Kuliah [JK]</div>
<div class="a" style="left:355.20px;top:186.20px;font-size:7.3px;"><u>C</u>olumn(s):</div>
<div class="lb" style="left:355.2px;top:194.2px;width:99.6px;height:29.1px;"></div>
<div class="a" style="left:356.8px;top:195.9px;width:96.3px;height:9.8px;background:#bebebe;"></div>
<svg class="a" style="left:357.40px;top:195.20px;" width="12" height="12" viewBox="-3 -8 12 12"><use href="#balls"/></svg>
<div class="a" style="left:370.50px;top:197.80px;font-size:7.3px;">Jenis Pekerjaan [JP]</div>
<div class="btn " style="left:464.30px;top:141.20px;width:44.10px;height:13.60px;font-size:7.3px;line-height:13.20px;">E<u>x</u>act...</div>
<div class="btn prs" style="left:464.30px;top:155.90px;width:44.10px;height:14.50px;font-size:7.3px;line-height:14.10px;"><u>S</u>tatistics...</div>
<div class="btn " style="left:464.30px;top:172.40px;width:44.10px;height:13.20px;font-size:7.3px;line-height:12.80px;">C<u>e</u>lls...</div>
<div class="btn " style="left:464.30px;top:187.30px;width:44.10px;height:13.40px;font-size:7.3px;line-height:13.00px;"><u>F</u>ormat...</div>
<div class="btn " style="left:464.30px;top:202.80px;width:44.10px;height:13.40px;font-size:7.3px;line-height:13.00px;">Sty<u>l</u>e...</div>
<div class="btn " style="left:464.30px;top:218.40px;width:44.10px;height:13.50px;font-size:7.3px;line-height:13.10px;">Bootstr<u>a</u>p...</div>
<div class="grp" style="left:329.4px;top:232.8px;width:127.6px;height:68.8px;"></div>
<div class="gl" style="left:333px;top:229.8px;font-size:7.3px;">Layer 1 of 1</div>
<div class="btn dis" style="left:337.70px;top:242.60px;width:35.60px;height:14.00px;font-size:7.3px;line-height:13.60px;">Pre<u>v</u>ious</div>
<div class="btn dis" style="left:415.40px;top:242.60px;width:35.60px;height:14.00px;font-size:7.3px;line-height:13.60px;"><u>N</u>ext</div>
<div class="btn dis" style="left:337.7px;top:270.6px;width:18.8px;height:17px;"><svg width="10" height="9" viewBox="0 0 10 9" style="transform:scaleX(-1);position:absolute;left:3.6px;top:3.2px"><path d="M0.6 4.4 L4.4 0.8 L4.4 3 Q8.6 2.6 8.6 0.4 Q9.8 5.6 4.4 6 L4.4 8 Z" fill="#6a6a72"/></svg></div>
<div class="lb" style="left:357.9px;top:262.9px;width:96.1px;height:33.4px;"></div>
<div class="a" style="left:329.2px;top:307.6px;width:8.4px;height:8.2px;background:#9b9b9b;border:1px solid #bcbcbc;box-sizing:border-box;"></div>
<div class="a" style="left:340.20px;top:308.00px;font-size:7.3px;color:#9aa7b8;text-decoration-color:#9aa7b8;">Displ<u style="text-decoration-color:#9aa7b8">a</u>y layer variables in table layers</div>
<div class="cb" style="left:221.20px;top:319.50px;"></div>
<div class="a" style="left:231.60px;top:319.70px;font-size:7.3px;">Display clustered <u>b</u>ar charts</div>
<div class="cb" style="left:221.20px;top:332.40px;"></div>
<div class="a" style="left:231.60px;top:332.70px;font-size:7.3px;">Suppress <u>t</u>ables</div>
<div class="btn def" style="left:283.40px;top:346.20px;width:29.50px;height:14.50px;font-size:7.3px;line-height:14.10px;">OK</div>
<div class="btn " style="left:316.10px;top:346.20px;width:29.70px;height:14.50px;font-size:7.3px;line-height:14.10px;"><u>P</u>aste</div>
<div class="btn " style="left:348.50px;top:346.20px;width:30.20px;height:14.50px;font-size:7.3px;line-height:14.10px;"><u>R</u>eset</div>
<div class="btn " style="left:381.30px;top:346.20px;width:29.90px;height:14.50px;font-size:7.3px;line-height:14.10px;">Cancel</div>
<div class="btn " style="left:413.40px;top:346.20px;width:30.50px;height:14.50px;font-size:7.3px;line-height:14.10px;">Help</div>
<div class="dlg" style="left:541.0px;top:224.6px;width:183.0px;height:210.4px;border-color:#8e9298;box-shadow:0 3.5px 11px rgba(0,0,0,0.42);"></div>
<div class="a" style="left:541.6px;top:225.2px;width:181.8px;height:16.600000000000016px;background:#fff;"></div>
<svg class="a" style="left:544.60px;top:225.70px" width="14" height="14" viewBox="-7 -7 14 14"><defs><radialGradient id="gGl551" cx="0.55" cy="0.4" r="0.6"><stop offset="0" stop-color="#e8f3fc"/><stop offset="0.45" stop-color="#86b9e8"/><stop offset="1" stop-color="#286cba"/></radialGradient></defs><circle cx="0" cy="0" r="4.7" fill="url(#gGl551)"/><rect x="0.5" y="0.5" width="4.5" height="4.6" fill="#e2385c"/><rect x="0.5" y="1.7" width="4.5" height="0.5" fill="#f3a3b4"/><rect x="0.5" y="3.2" width="4.5" height="0.5" fill="#f3a3b4"/><path d="M-2.4 -4.8 L-2.4 0 M-4.8 -2.4 L0 -2.4" stroke="#dc143c" stroke-width="1.35"/></svg>
<div class="a" style="left:559.30px;top:229.60px;font-size:7.8px;color:#111;-webkit-text-stroke:0;transform:scaleX(0.872);transform-origin:0 50%;">Crosstabs: Statistics</div>
<svg class="a" style="left:711px;top:229.6px" width="8" height="8"><path d="M0.8 0.8 L6.6 6.6 M6.6 0.8 L0.8 6.6" stroke="#151515" stroke-width="0.95"/></svg>
<div class="cb" style="left:550.80px;top:251.30px;background:#fff;"></div>
<svg class="a" style="left:551.4px;top:251.6px" width="7" height="7"><path d="M1 3.2 L2.8 5.6 L6 0.8" stroke="#25258f" stroke-width="1.7" fill="none"/></svg>
<div class="a" style="left:559.3px;top:249.2px;width:87.5px;height:11.5px;border:0.7px solid #8a94a3;box-sizing:border-box;"></div>
<div class="a" style="left:561.00px;top:251.50px;font-size:7.3px;">C<u>h</u>i-square</div>
<div class="cb" style="left:650.30px;top:251.30px;"></div>
<div class="a" style="left:660.70px;top:251.50px;font-size:7.3px;">Co<u>r</u>relations</div>
<div class="grp" style="left:549.4px;top:271.0px;width:92.4px;height:60.4px;"></div>
<div class="gl" style="left:552.6px;top:267.9px;">Nominal</div>
<div class="cb" style="left:553.40px;top:281.10px;"></div>
<div class="a" style="left:563.90px;top:281.30px;font-size:7.3px;">C<u>o</u>ntingency coefficient</div>
<div class="cb" style="left:553.40px;top:294.30px;"></div>
<div class="a" style="left:563.90px;top:294.50px;font-size:7.3px;"><u>P</u>hi and Cramer's V</div>
<div class="cb" style="left:553.40px;top:307.50px;"></div>
<div class="a" style="left:563.90px;top:307.70px;font-size:7.3px;"><u>L</u>ambda</div>
<div class="cb" style="left:553.40px;top:320.70px;"></div>
<div class="a" style="left:563.90px;top:320.90px;font-size:7.3px;"><u>U</u>ncertainty coefficient</div>
<div class="grp" style="left:649.2px;top:271.0px;width:67.0px;height:60.4px;"></div>
<div class="gl" style="left:652.6px;top:267.9px;">Ordinal</div>
<div class="cb" style="left:653.60px;top:281.10px;"></div>
<div class="a" style="left:664.00px;top:281.30px;font-size:7.3px;"><u>G</u>amma</div>
<div class="cb" style="left:653.60px;top:294.30px;"></div>
<div class="a" style="left:664.00px;top:294.50px;font-size:7.3px;"><u>S</u>omers' d</div>
<div class="cb" style="left:653.60px;top:307.50px;"></div>
<div class="a" style="left:664.00px;top:307.70px;font-size:7.3px;">Kendall's tau-<u>b</u></div>
<div class="cb" style="left:653.60px;top:320.70px;"></div>
<div class="a" style="left:664.00px;top:320.90px;font-size:7.3px;">Kendall's tau-<u>c</u></div>
<div class="grp" style="left:549.4px;top:343.0px;width:92.4px;height:32.2px;"></div>
<div class="gl" style="left:552.6px;top:339.9px;">Nominal by Interval</div>
<div class="cb" style="left:553.40px;top:353.50px;"></div>
<div class="a" style="left:563.90px;top:353.70px;font-size:7.3px;"><u>E</u>ta</div>
<div class="cb" style="left:650.30px;top:341.70px;"></div>
<div class="a" style="left:660.70px;top:341.90px;font-size:7.3px;"><u>K</u>appa</div>
<div class="cb" style="left:650.30px;top:354.80px;"></div>
<div class="a" style="left:660.70px;top:355.00px;font-size:7.3px;">R<u>i</u>sk</div>
<div class="cb" style="left:650.30px;top:367.90px;"></div>
<div class="a" style="left:660.70px;top:368.10px;font-size:7.3px;"><u>M</u>cNemar</div>
<div class="cb" style="left:550.40px;top:385.90px;"></div>
<div class="a" style="left:560.60px;top:386.10px;font-size:7.3px;">Cochr<u>a</u>n's and Mantel-Haenszel statistics</div>
<div class="a" style="left:561.40px;top:397.70px;font-size:7.3px;color:#a3afbf;"><u style="text-decoration-color:#a3afbf">T</u>est common odds ratio equals:</div>
<div class="a" style="left:672.2px;top:395.5px;width:28.7px;height:12.9px;border:1px solid #b9cde6;background:#e9f1fb;box-sizing:border-box;"></div>
<div class="a" style="left:675.00px;top:398.20px;font-size:7.3px;color:#a3afbf;">1</div>
<div class="btn def" style="left:575.60px;top:413.60px;width:35.80px;height:14.60px;font-size:7.3px;line-height:14.20px;"><u>C</u>ontinue</div>
<div class="btn " style="left:614.80px;top:414.40px;width:35.80px;height:13.10px;font-size:7.3px;line-height:12.70px;">Cancel</div>
<div class="btn " style="left:653.60px;top:414.40px;width:36.40px;height:13.10px;font-size:7.3px;line-height:12.70px;">Help</div>
<div class="a" style="left:546.8px;top:244.0px;width:62.0px;height:20.7px;border:3px solid #e9151f;box-sizing:border-box;"></div>
<div class="a" style="left:574.0px;top:411.2px;width:39.3px;height:19.4px;border:3px solid #e9151f;box-sizing:border-box;"></div>
<svg class="a" style="left:0;top:0" width="768" height="562" viewBox="0 0 768 562">
<polygon points="433.3,427.9 540.3,427.9 530.9,475.2 411.8,475.2" fill="#7f97cb" fill-opacity="0.88"/>
<polygon points="316.1,416.6 437.2,416.6 428.2,463.4 307.1,463.4" fill="#63c9f3" fill-opacity="0.88"/>
<text x="315.5" y="455.6" font-family="Liberation Serif" font-weight="bold" font-size="46.5" fill="#fff" stroke="#fff" stroke-width="0.45" textLength="31.4" lengthAdjust="spacingAndGlyphs">A</text>
<text x="345.8" y="455.6" font-family="Liberation Serif" font-weight="bold" font-size="46.5" fill="#fff" stroke="#fff" stroke-width="0.45" textLength="25.5" lengthAdjust="spacingAndGlyphs">S</text>
<text x="371.2" y="455.6" font-family="Liberation Serif" font-weight="bold" font-size="46.5" fill="#fff" stroke="#fff" stroke-width="0.45" textLength="26.7" lengthAdjust="spacingAndGlyphs">2</text>
<text x="398.0" y="455.6" font-family="Liberation Serif" font-weight="bold" font-size="46.5" fill="#fff" stroke="#fff" stroke-width="0.45" textLength="28.9" lengthAdjust="spacingAndGlyphs">8</text>
<g fill="none" stroke="#fff" stroke-linecap="round" stroke-linejoin="round">
<path d="M463.6 433.6 C455 433.2 446 439 440.5 446 C436 451.5 434.5 456 438.5 457 C443 458 449.5 454.5 452.8 448" stroke-width="4.9"/>
<path d="M459.3 439.3 C457 445 452 455 448 462 C445.5 466 443 468.5 440 469.8" stroke-width="5.2"/>
<path d="M454.5 456.5 C459 452.5 462.5 448 465.8 445.2" stroke-width="2.1"/>
<path d="M465.2 445.6 C467.5 446.5 468.3 447.5 468 450 C467.6 453 466.8 456 467.6 458.6 C468.4 459.6 470 459.2 471.5 458" stroke-width="5.0"/>
<path d="M471.5 458 C473.5 456.5 475.5 454.5 477.5 452.5" stroke-width="2.0"/>
<ellipse cx="484.4" cy="452.3" rx="6.0" ry="4.4" transform="rotate(-28 484.4 452.3)" stroke-width="5.0"/>
<path d="M492.5 455.5 C496 452.5 499 448.5 501.4 445.2" stroke-width="2.1"/>
<path d="M501.6 445.2 C499 449.5 496 455 496.8 458 C497.8 461 501.5 458.5 504 455 C506.5 451.5 508.5 448 510 445.6" stroke-width="4.4"/>
<path d="M510 445.6 C507.5 450 504.8 455.5 505.8 458.4 C507 461.2 511 457.5 516.5 450.5" stroke-width="4.4"/>
<path d="M526.2 441 C524 446 519.5 455 515.5 461.5 C513.5 464.8 512 466.8 510.4 468" stroke-width="4.9"/>
<path d="M522 450.5 C526 448.3 531.5 447.2 533 450.5 C534.5 454 531.5 457.5 527.5 458.2 C524.5 458.8 522 458.2 519.8 457.4" stroke-width="4.7"/>
</g>
<text x="308.9" y="500.6" font-family="Liberation Sans" font-weight="bold" font-size="17.8" fill="#7390c8" fill-opacity="0.95" textLength="38.5" lengthAdjust="spacingAndGlyphs">Jasa</text>
<text x="353.0" y="500.6" font-family="Liberation Sans" font-weight="bold" font-size="17.8" fill="#7390c8" fill-opacity="0.95" textLength="42.4" lengthAdjust="spacingAndGlyphs">Olah</text>
<text x="401.5" y="500.6" font-family="Liberation Sans" font-weight="bold" font-size="17.8" fill="#7390c8" fill-opacity="0.95" textLength="42.4" lengthAdjust="spacingAndGlyphs">Data</text>
<text x="450.3" y="500.6" font-family="Liberation Sans" font-weight="bold" font-size="17.8" fill="#7390c8" fill-opacity="0.95" textLength="84.9" lengthAdjust="spacingAndGlyphs">Statistika</text>
</svg>
</body></html>
